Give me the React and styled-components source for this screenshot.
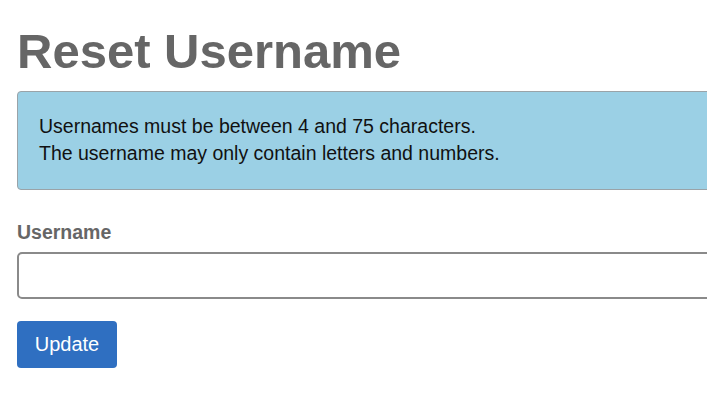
import React from 'react';
import styled, { createGlobalStyle } from 'styled-components';

const GlobalStyle = createGlobalStyle`
  html, body {
    margin: 0;
    padding: 0;
    background: #fff;
    overflow: hidden;
  }
  body {
    font-family: "Liberation Sans", Arial, sans-serif;
  }
`;

const Page = styled.div`
  width: 1000px;
  padding: 16px 0 0 17px;
  box-sizing: border-box;
`;

const Title = styled.h1`
  margin: 0 0 5px;
  font-size: 49px;
  font-weight: bold;
  line-height: 70px;
  color: #666;
`;

const Alert = styled.div`
  background: #9bd0e5;
  border: 1px solid #9aa3a8;
  border-radius: 4px;
  padding: 21px 21px 22px 21px;
  font-size: 19.5px;
  line-height: 27px;
  color: #111;
  margin-bottom: 31px;
`;

const Label = styled.label`
  display: block;
  font-size: 19.5px;
  font-weight: bold;
  color: #666;
  margin-bottom: 8px;
`;

const Input = styled.input`
  display: block;
  width: 100%;
  height: 47px;
  box-sizing: border-box;
  border: 2px solid #8a8a8a;
  border-radius: 5px;
  background: #fff;
  margin-bottom: 22px;
  font-size: 18px;
  padding: 0 12px;
`;

const Button = styled.button`
  width: 100px;
  height: 47px;
  border: none;
  border-radius: 4px;
  background: #2f6fc1;
  color: #fff;
  font-family: "Liberation Sans", Arial, sans-serif;
  font-size: 20px;
  cursor: pointer;
`;

export default function App() {
  return (
    <>
      <GlobalStyle />
      <Page>
        <Title>Reset Username</Title>
        <Alert>
          Usernames must be between 4 and 75 characters.
          <br />
          The username may only contain letters and numbers.
        </Alert>
        <Label htmlFor="username">Username</Label>
        <Input id="username" type="text" />
        <Button type="button">Update</Button>
      </Page>
    </>
  );
}
